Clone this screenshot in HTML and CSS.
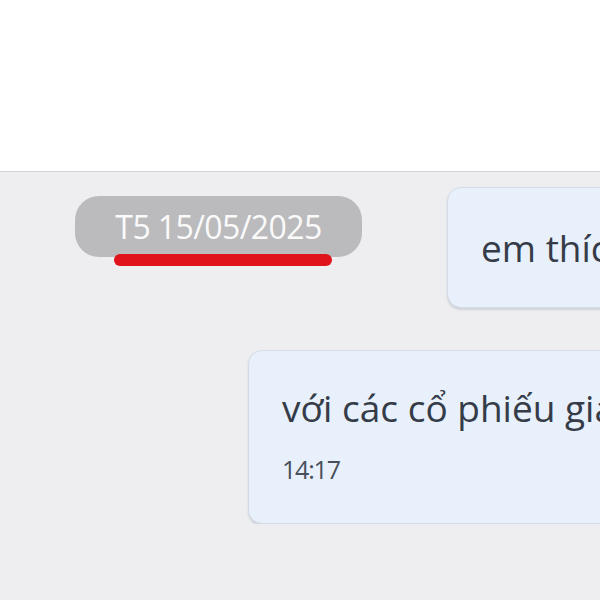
FILE: index.html
```html
<!DOCTYPE html>
<html>
  <head>
    <meta charset="utf-8">
    <meta name="viewport" content="width=device-width, initial-scale=1">
    <title>Chat</title>
    <link rel="stylesheet" href="styles.css">
  </head>
  <body>
    <div class="topbar"></div>

    <div class="chat">
      <div class="row row_first">
        <div class="date_pill">
          T5 15/05/2025
          <span class="mark"></span>
        </div>
        <div class="bubble bubble_short">
          <div class="msg">em thích</div>
        </div>
      </div>

      <div class="row">
        <div class="bubble bubble_long">
          <div class="msg">với các cổ phiếu giá</div>
          <div class="time">14:17</div>
        </div>
      </div>
    </div>
  </body>
</html>
```

FILE: styles.css
```css
* {
  margin: 0;
  padding: 0;
  box-sizing: border-box;
}

body {
  width: 600px;
  height: 600px;
  overflow: hidden;
  background: #eeeef0;
  font-family: "Open Sans", "Noto Sans", sans-serif;
  color: #353c48;
}

.topbar {
  height: 172px;
  background: #fff;
  border-bottom: 1px solid #d6d6d9;
}

.chat {
  padding-top: 15px;
  overflow: hidden;
}

.row {
  display: flex;
  align-items: flex-start;
}

.row_first {
  height: 121px;
}

.date_pill {
  position: relative;
  flex-shrink: 0;
  margin-left: 75px;
  margin-top: 9px;
  width: 287px;
  height: 61px;
  border-radius: 24px;
  background: #bbbbbe;
  color: #fafafa;
  font-size: 32px;
  font-weight: 500;
  line-height: 61px;
  text-align: center;
  white-space: nowrap;
  letter-spacing: -0.6px;
}

.mark {
  position: absolute;
  left: 39px;
  top: 58px;
  width: 218px;
  height: 12px;
  border-radius: 6px;
  background: #e0121c;
}

.bubble {
  flex-shrink: 0;
  width: 420px;
  background: #e8f0fc;
  border: 1px solid #d4dbe6;
  border-radius: 14px;
  box-shadow: 0 2px 2px rgba(120, 130, 150, 0.25);
  white-space: nowrap;
}

.bubble_short {
  margin-left: 85px;
  height: 121px;
  padding: 36px 0 0 33px;
}

.bubble_long {
  margin-left: 248px;
  margin-top: 42px;
  height: 174px;
  padding: 33px 0 0 33px;
}

.msg {
  font-size: 37px;
  line-height: 48px;
}

.time {
  margin-top: 22px;
  font-size: 25px;
  line-height: 30px;
  color: #4a505a;
  letter-spacing: -1.2px;
}
```
